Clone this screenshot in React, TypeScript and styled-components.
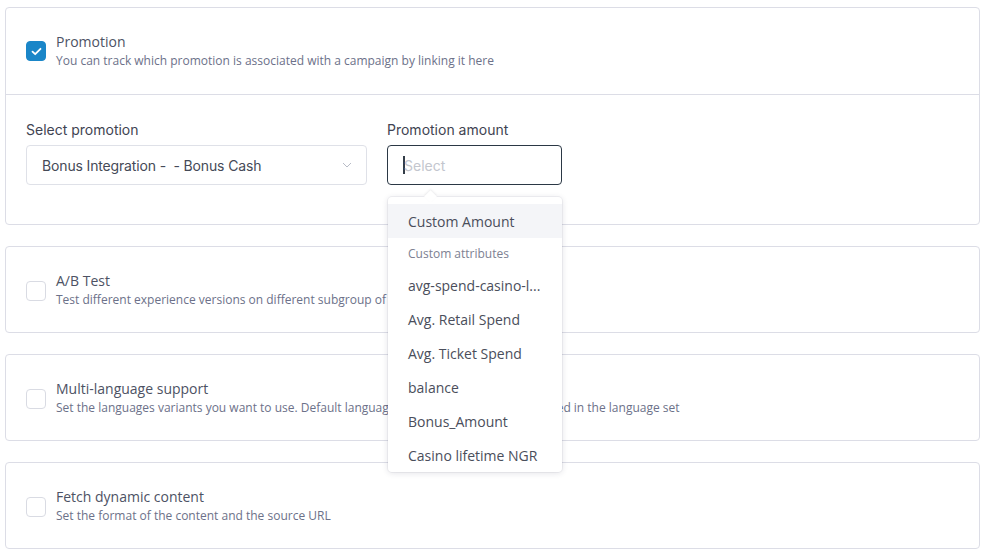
import styled, { createGlobalStyle } from "styled-components"

const GlobalStyle = createGlobalStyle`
  body {
    margin: 0;
    background: #ffffff;
    font-family: "Open Sans", "Liberation Sans", sans-serif;
  }
`

const Page = styled.div`
  display: flex;
  flex-direction: column;
  gap: 21px;
  padding: 7px 9px 0 5px;
  width: 975px;
`

const Card = styled.section`
  border: 1px solid #dcdde6;
  border-radius: 4px;
  background: #fff;
`

const Header = styled.div<{ $divider?: boolean }>`
  box-sizing: border-box;
  display: flex;
  align-items: center;
  gap: 10px;
  height: ${({ $divider }) => ($divider ? "87px" : "85px")};
  padding: ${({ $divider }) => ($divider ? "0 0 0 20px" : "2px 0 0 20px")};
  border-bottom: ${({ $divider }) => ($divider ? "1px solid #dcdde6" : "none")};
`

const Box = styled.span<{ $checked?: boolean }>`
  flex: none;
  width: 20px;
  height: 20px;
  box-sizing: border-box;
  border-radius: 4px;
  display: flex;
  align-items: center;
  justify-content: center;
  border: 1px solid ${({ $checked }) => ($checked ? "#1a86c8" : "#d9dbe3")};
  background: ${({ $checked }) => ($checked ? "#1a86c8" : "#fff")};
`

const Texts = styled.div`
  display: flex;
  flex-direction: column;
  gap: 1px;
  margin-top: -2px;
`

const Title = styled.div`
  font-size: 14px;
  color: #4d5264;
  line-height: 19px;
`

const Desc = styled.div`
  font-size: 12px;
  color: #6c7189;
  line-height: 17px;
  white-space: nowrap;
`

const Body = styled.div`
  display: flex;
  gap: 20px;
  padding: 25px 20px 39px;
`

const Field = styled.div<{ $width: number }>`
  position: relative;
  display: flex;
  flex-direction: column;
  gap: 6px;
  width: ${({ $width }) => $width}px;
`

const Label = styled.label`
  font-family: Inter, "Liberation Sans", sans-serif;
  font-size: 14px;
  color: #3f4452;
  line-height: 19px;
`

const SelectBox = styled.div`
  height: 40px;
  box-sizing: border-box;
  border: 1px solid #dfe1e8;
  border-radius: 4px;
  display: flex;
  align-items: center;
  justify-content: space-between;
  padding: 0 14px 0 15px;
  font-family: Inter, "Liberation Sans", sans-serif;
  font-size: 14px;
  letter-spacing: -0.15px;
  color: #454a57;
`

const InputBox = styled.div`
  height: 40px;
  box-sizing: border-box;
  border: 1px solid #2b3845;
  border-radius: 4px;
  display: flex;
  align-items: center;
  padding-left: 15px;
  font-family: Inter, "Liberation Sans", sans-serif;
  font-size: 14px;
  color: #c3c6ce;
`

const Caret = styled.span`
  width: 2px;
  height: 18px;
  background: #333d48;
  margin-right: -1px;
`

const Menu = styled.div`
  position: absolute;
  top: 77px;
  left: 1px;
  width: 174px;
  box-sizing: border-box;
  background: #fff;
  border-radius: 4px;
  box-shadow: 0 0 0 1px rgba(40, 45, 70, 0.05), 0 1px 6px rgba(40, 45, 70, 0.14);
  padding: 7px 0 0;
  z-index: 2;

  &::before {
    content: "";
    position: absolute;
    top: -5px;
    left: 38px;
    width: 9px;
    height: 9px;
    background: #fff;
    transform: rotate(45deg);
    box-shadow: -1px -1px 2px rgba(40, 45, 70, 0.08);
  }
`

const Item = styled.div<{ $active?: boolean }>`
  position: relative;
  height: 34px;
  display: flex;
  align-items: center;
  padding-left: 20px;
  font-size: 14px;
  color: #4a4e5b;
  background: ${({ $active }) => ($active ? "#f4f5f8" : "transparent")};
`

const GroupLabel = styled.div`
  height: 30px;
  display: flex;
  align-items: center;
  padding-left: 20px;
  font-size: 12px;
  color: #7d8192;
`

const Check = () => (
  <svg width="11" height="9" viewBox="0 0 11 9" fill="none">
    <path d="M1.5 4.6 4.2 7.2 9.5 1.8" stroke="#fff" strokeWidth="1.8" strokeLinecap="round" strokeLinejoin="round" />
  </svg>
)

const Chevron = () => (
  <svg width="10" height="6" viewBox="0 0 10 6" fill="none">
    <path d="M1 1l4 4 4-4" stroke="#b8bcc7" strokeWidth="1" />
  </svg>
)

const options = [
  "avg-spend-casino-l...",
  "Avg. Retail Spend",
  "Avg. Ticket Spend",
  "balance",
  "Bonus_Amount",
  "Casino lifetime NGR",
]

const sections = [
  { title: "A/B Test", desc: "Test different experience versions on different subgroup of users" },
  {
    title: "Multi-language support",
    desc: "Set the languages variants you want to use. Default language will be used if none is matched in the language set",
  },
  { title: "Fetch dynamic content", desc: "Set the format of the content and the source URL" },
]

export default function App() {
  return (
    <>
      <GlobalStyle />
      <Page>
        <Card>
          <Header $divider>
            <Box $checked>
              <Check />
            </Box>
            <Texts>
              <Title>Promotion</Title>
              <Desc>You can track which promotion is associated with a campaign by linking it here</Desc>
            </Texts>
          </Header>
          <Body>
            <Field $width={341}>
              <Label>Select promotion</Label>
              <SelectBox>
                <span>Bonus Integration - &nbsp;- Bonus Cash</span>
                <Chevron />
              </SelectBox>
            </Field>
            <Field $width={175}>
              <Label>Promotion amount</Label>
              <InputBox>
                <Caret />
                <span>Select</span>
              </InputBox>
              <Menu>
                <Item $active>Custom Amount</Item>
                <GroupLabel>Custom attributes</GroupLabel>
                {options.map((o) => (
                  <Item key={o}>{o}</Item>
                ))}
              </Menu>
            </Field>
          </Body>
        </Card>
        {sections.map((s) => (
          <Card key={s.title}>
            <Header>
              <Box />
              <Texts>
                <Title>{s.title}</Title>
                <Desc>{s.desc}</Desc>
              </Texts>
            </Header>
          </Card>
        ))}
      </Page>
    </>
  )
}
